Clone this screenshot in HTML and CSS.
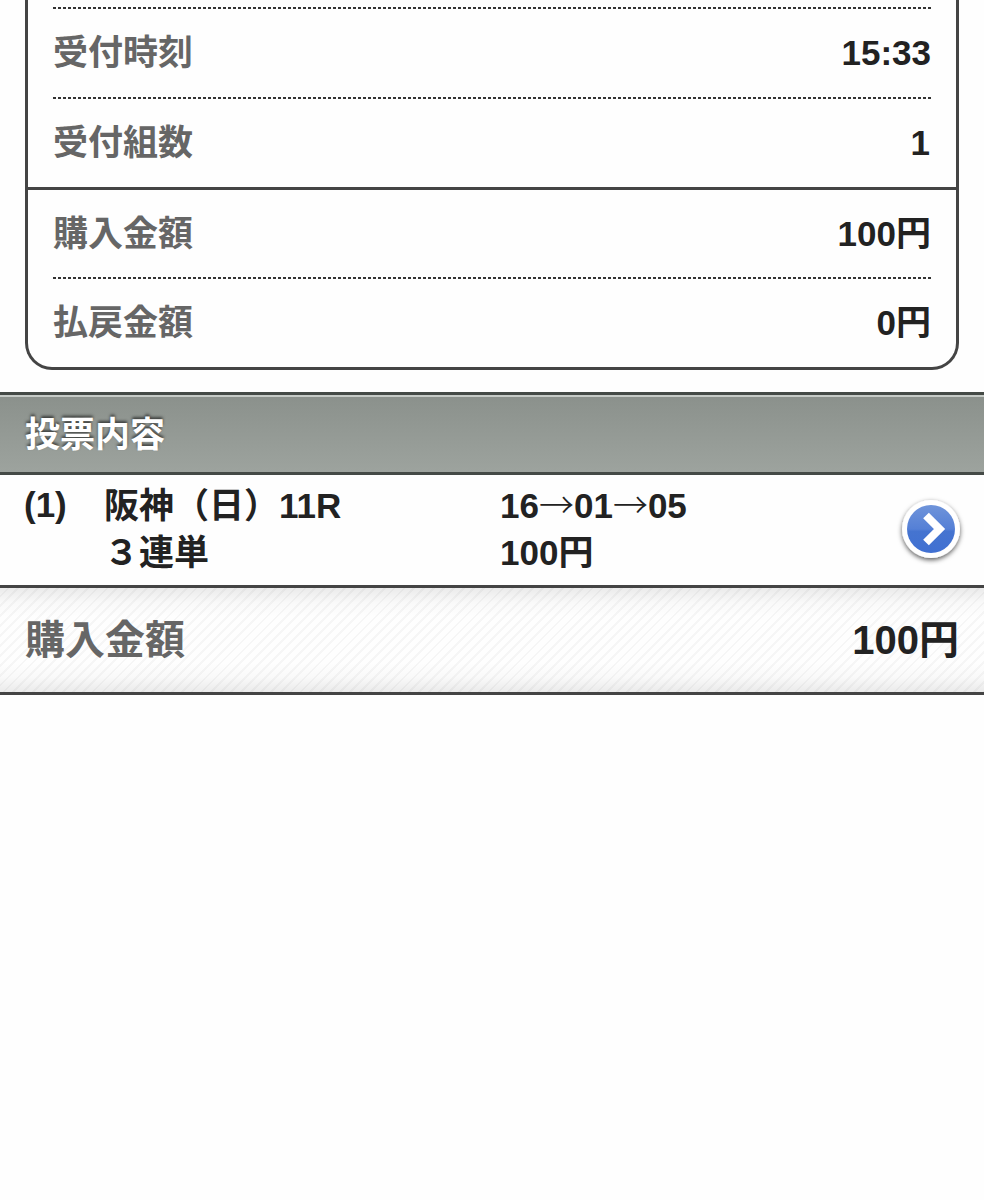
FILE: index.html
```html
<!DOCTYPE html>
<html lang="ja">
<head>
<meta charset="utf-8">
<meta name="viewport" content="width=device-width, initial-scale=1">
<title>投票内容</title>
<link rel="stylesheet" href="styles.css">
</head>
<body>
<main>
  <dl class="card">
    <div class="row dotted"><dt>受付時刻</dt><dd>15:33</dd></div>
    <div class="row dotted"><dt>受付組数</dt><dd class="count">1</dd></div>
    <div class="row solid"><dt>購入金額</dt><dd>100円</dd></div>
    <div class="row dotted"><dt>払戻金額</dt><dd>0円</dd></div>
  </dl>
  <h2 class="heading">投票内容</h2>
  <div class="bet">
    <span class="number">(1)</span>
    <div class="race">阪神（日）11R<br>３連単</div>
    <div class="pick">16<span class="arrow">→</span>01<span class="arrow">→</span>05<br>100円</div>
    <button class="detail" type="button" aria-label="詳細">
      <svg viewBox="0 0 72 72" width="72" height="72" aria-hidden="true">
        <defs>
          <linearGradient id="blue" x1="0" y1="0" x2="0" y2="1">
            <stop offset="0" stop-color="#6f94da"/>
            <stop offset="0.5" stop-color="#5580d6"/>
            <stop offset="0.55" stop-color="#4574d0"/>
            <stop offset="1" stop-color="#4070d2"/>
          </linearGradient>
          <filter id="shade" x="-20%" y="-20%" width="140%" height="150%">
            <feDropShadow dx="0" dy="2" stdDeviation="2.500" flood-color="#000" flood-opacity="0.65"/>
          </filter>
        </defs>
        <circle cx="36" cy="36" r="29" fill="#fff" filter="url(#shade)"/>
        <circle cx="36" cy="36" r="24" fill="url(#blue)"/>
        <path d="M31 22.500L44.500 36L31 49.500" fill="none" stroke="#fff" stroke-width="8"/>
      </svg>
    </button>
  </div>
  <dl class="total"><dt>購入金額</dt><dd>100円</dd></dl>
</main>
</body>
</html>
```
FILE: styles.css
```css
* {
  box-sizing: border-box;
}

body {
  margin: 0;
  background: #fefefe;
  color: #222;
  font: bold 35px/46px "Liberation Sans", "Noto Sans CJK JP", sans-serif;
}

dl, dd, h2 {
  margin: 0;
}

.card {
  margin: 0 25px 22px;
  padding-top: 7px;
  border: solid #444;
  border-width: 0 3px 3px;
  border-radius: 0 0 27px 27px;
}

.row {
  display: flex;
  justify-content: space-between;
  align-items: center;
  height: 90px;
  padding-top: 2px;
}

.row dt, .total dt {
  color: #666;
}

.dotted {
  margin: 0 25px;
  background: repeating-linear-gradient(90deg, #333 0 3px, transparent 3px 5px) 0 0 / 100% 2px no-repeat;
}

.solid {
  padding: 0 25px;
  border-top: 3px solid #444;
}

.row .count {
  padding-right: 1px;
}

.heading {
  padding: 16px 25px 14px;
  border: solid #444a46;
  border-width: 3px 0;
  background: linear-gradient(#c6cbc7 0 2px, #8b918c 2px, #9da39e);
  color: #fff;
  font-size: 35px;
  line-height: 47px;
  text-shadow: 0 -2px 3px rgba(0, 0, 0, 0.6);
}

.bet {
  display: grid;
  grid-template-columns: 80px 396fr 395fr 72px;
  align-items: center;
  height: 110px;
  padding: 0 17px 2px 24px;
  line-height: 47px;
}

.number {
  align-self: start;
  padding-top: 6px;
}

.arrow {
  font-family: "Noto Sans CJK JP", sans-serif;
  font-weight: 300;
  line-height: 1;
}

.detail {
  width: 72px;
  height: 72px;
  padding: 0;
  border: 0;
  background: none;
  cursor: pointer;
}

.detail svg {
  display: block;
}

.total {
  display: flex;
  justify-content: space-between;
  align-items: center;
  height: 110px;
  padding: 0 25px;
  border: solid #444;
  border-width: 3px 0;
  background:
    linear-gradient(rgba(0, 0, 0, 0.08), rgba(0, 0, 0, 0.02) 14%, transparent 28%, transparent 72%, rgba(0, 0, 0, 0.02) 86%, rgba(0, 0, 0, 0.08)),
    repeating-linear-gradient(135deg, #fefefe 0 5px, #f6f6f6 5px 7px);
  font-size: 40px;
}
```
